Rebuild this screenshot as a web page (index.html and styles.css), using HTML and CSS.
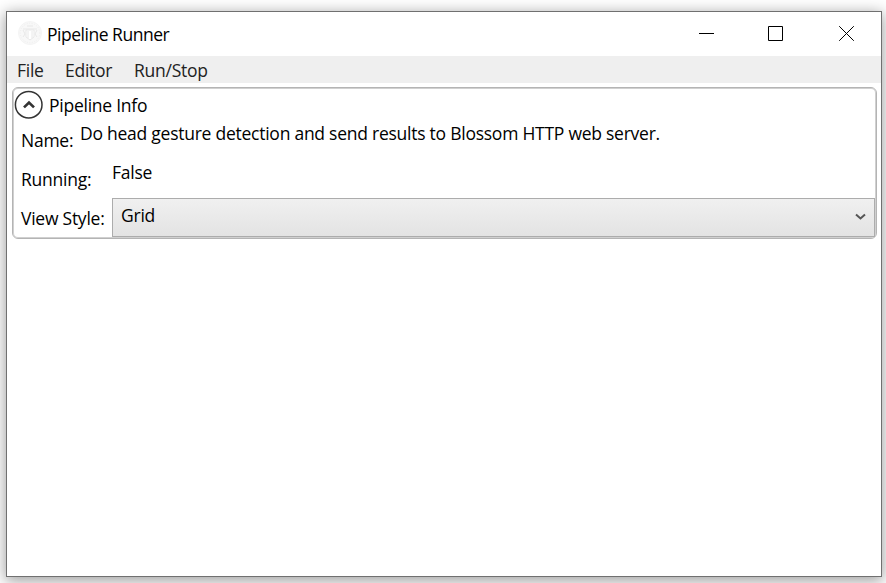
FILE: index.html
```
<!DOCTYPE html>
<html lang="en">
<head>
<meta charset="utf-8">
<title>Pipeline Runner</title>
<link rel="stylesheet" href="styles.css">
</head>
<body>
<main class="window">
  <header class="titlebar">
    <svg class="app-icon" width="24" height="24" viewBox="0 0 24 24" fill="none" stroke="#e8e8e8">
      <circle cx="12" cy="12" r="11.5" fill="#f8f8f8" stroke="#f4f4f4"/>
      <circle cx="12" cy="12" r="9.8" stroke="#efefef" stroke-dasharray="1 1.5"/>
      <path d="M8 9h8v7l-4 3-4-3z" fill="#fff"/>
      <path d="M5 8h14M10 10v7M14 10v7M5 9l2 4-2 3M19 9l-2 4 2 3M9 5h6"/>
    </svg>
    <h1 class="title">Pipeline Runner</h1>
    <div class="controls">
      <svg width="15" height="15" viewBox="0 0 15 15"><path d="M0 7.5h15" stroke="#000"/></svg>
      <svg width="15" height="15" viewBox="0 0 15 15"><path d="M.5.5h14v14H.5z" fill="none" stroke="#000"/></svg>
      <svg width="15" height="15" viewBox="0 0 15 15"><path d="M.2.2l14.6 14.6M14.8.2L.2 14.8" stroke="#000"/></svg>
    </div>
  </header>
  <nav class="menu">
    <span class="file">File</span><span class="editor">Editor</span><span class="run">Run/Stop</span>
  </nav>
  <section class="info">
    <div class="expander">
      <svg width="30" height="30" viewBox="0 0 30 30" fill="none" stroke="#333">
        <circle cx="14.7" cy="14.7" r="13.3" stroke-width="1.5"/>
        <path d="M10 17.4l5-4.8 5 4.8" stroke-width="2.7"/>
      </svg>
      <span class="heading">Pipeline Info</span>
    </div>
    <div class="row"><span class="label name">Name:</span><span class="value">Do head gesture detection and send results to Blossom HTTP web server.</span></div>
    <div class="row"><span class="label">Running:</span><span class="value">False</span></div>
    <div class="row"><span class="label">View Style:</span>
      <div class="select"><span>Grid</span>
        <svg width="11" height="8" viewBox="0 0 11 8"><path d="M1 1.5l4.5 4 4.5-4" fill="none" stroke="#555" stroke-width="2"/></svg>
      </div>
    </div>
  </section>
</main>
</body>
</html>
```
FILE: styles.css
```
* { box-sizing: border-box; }
body {
  margin: 0;
  width: 886px;
  height: 583px;
  overflow: hidden;
  padding: 11px 4px 6px 6px;
  background: #fff;
  font: 17.5px/22px "Open Sans", "Noto Sans", sans-serif;
  letter-spacing: -.25px;
  color: #000;
}
svg { display: block; flex: none; }
span, h1 { white-space: nowrap; }
.window {
  height: 566px;
  border: 1px solid #707070;
  background: #fff;
  box-shadow: 0 3px 14px 1px rgba(0, 0, 0, .38);
}
.titlebar {
  display: flex;
  align-items: center;
  height: 44px;
  padding: 0 27px 0 11px;
}
.app-icon { margin-top: -2px; }
.title { margin: -1px 0 0 5px; font-size: inherit; font-weight: 400; letter-spacing: -.48px; }
.controls { display: flex; gap: 55px; margin: -1px 0 0 auto; }
.controls svg:nth-child(2) { margin: 0 1px 0 -1px; }
.menu {
  display: flex;
  align-items: center;
  height: 27px;
  padding: 0 0 0 10px;
  background: #efefef;
  color: #222;
}
.menu span { flex: none; }
.file { width: 48px; }
.editor { width: 69px; }
.info {
  height: 152px;
  margin: 4px 4px 0 5px;
  border: 1px solid #b4b4b4;
  border-radius: 6px;
  padding: 1px;
  box-shadow: inset 0 0 0 1px #d0d0d0;
}
.expander { display: flex; align-items: center; height: 31px; }
.heading { margin: 1px 0 0 5px; }
.row { display: flex; height: 39px; padding-left: 7px; }
.label { width: 91px; padding-top: 9px; flex: none; }
.name { width: 59px; }
.value { padding-top: 2px; }
.select {
  display: flex;
  justify-content: space-between;
  flex: 1;
  height: 39px;
  padding: 5px 8px 0 8px;
  border: 1px solid #acacac;
  background: linear-gradient(#f0f0f0, #e3e3e3);
}
.select svg { margin-top: 9px; }
```
